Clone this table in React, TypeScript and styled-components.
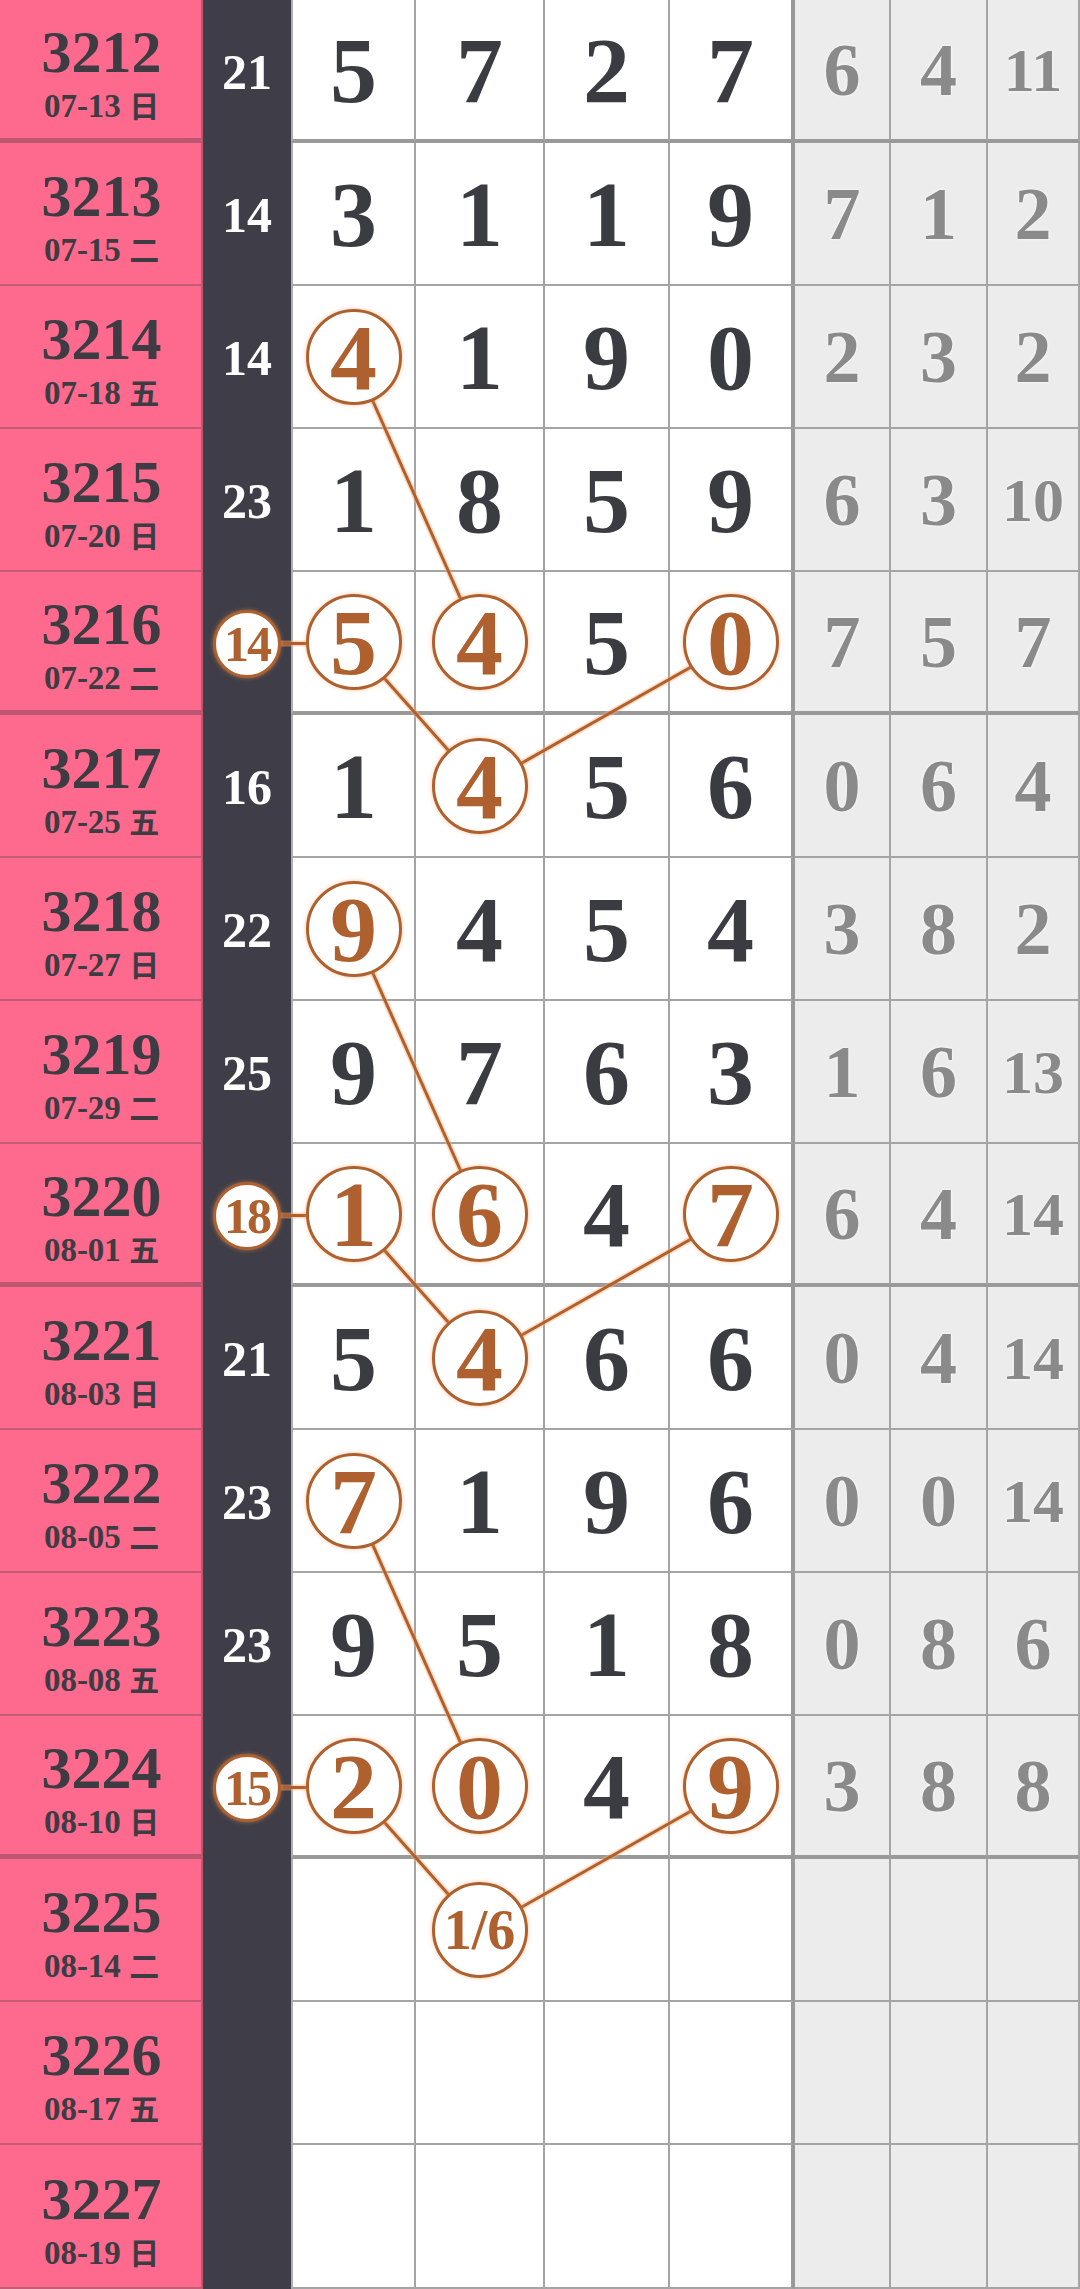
import React from 'react';
import styled, { createGlobalStyle } from 'styled-components';

interface Draw {
  issue: string;
  date: string;
  day: string;
  sum: string;
  sumHit?: boolean;
  nums: string[];
  hits: number[];
  stats: string[];
}

const ROW_H = 143;
// x edges of the columns, used by the link overlay
const COLS = [203, 88, 125, 129, 125, 125, 96, 97, 92];
const EDGES = COLS.reduce<number[]>((acc, w) => [...acc, acc[acc.length - 1] + w], [0]);
const colCenter = (i: number) => (EDGES[i] + EDGES[i + 1]) / 2;
const rowCenter = (r: number) => r * ROW_H + ROW_H / 2;

const DRAWS: Draw[] = [
  { issue: '3212', date: '07-13', day: '日', sum: '21', nums: ['5', '7', '2', '7'], hits: [], stats: ['6', '4', '11'] },
  { issue: '3213', date: '07-15', day: '二', sum: '14', nums: ['3', '1', '1', '9'], hits: [], stats: ['7', '1', '2'] },
  { issue: '3214', date: '07-18', day: '五', sum: '14', nums: ['4', '1', '9', '0'], hits: [0], stats: ['2', '3', '2'] },
  { issue: '3215', date: '07-20', day: '日', sum: '23', nums: ['1', '8', '5', '9'], hits: [], stats: ['6', '3', '10'] },
  { issue: '3216', date: '07-22', day: '二', sum: '14', sumHit: true, nums: ['5', '4', '5', '0'], hits: [0, 1, 3], stats: ['7', '5', '7'] },
  { issue: '3217', date: '07-25', day: '五', sum: '16', nums: ['1', '4', '5', '6'], hits: [1], stats: ['0', '6', '4'] },
  { issue: '3218', date: '07-27', day: '日', sum: '22', nums: ['9', '4', '5', '4'], hits: [0], stats: ['3', '8', '2'] },
  { issue: '3219', date: '07-29', day: '二', sum: '25', nums: ['9', '7', '6', '3'], hits: [], stats: ['1', '6', '13'] },
  { issue: '3220', date: '08-01', day: '五', sum: '18', sumHit: true, nums: ['1', '6', '4', '7'], hits: [0, 1, 3], stats: ['6', '4', '14'] },
  { issue: '3221', date: '08-03', day: '日', sum: '21', nums: ['5', '4', '6', '6'], hits: [1], stats: ['0', '4', '14'] },
  { issue: '3222', date: '08-05', day: '二', sum: '23', nums: ['7', '1', '9', '6'], hits: [0], stats: ['0', '0', '14'] },
  { issue: '3223', date: '08-08', day: '五', sum: '23', nums: ['9', '5', '1', '8'], hits: [], stats: ['0', '8', '6'] },
  { issue: '3224', date: '08-10', day: '日', sum: '15', sumHit: true, nums: ['2', '0', '4', '9'], hits: [0, 1, 3], stats: ['3', '8', '8'] },
  { issue: '3225', date: '08-14', day: '二', sum: '', nums: ['', '1/6', '', ''], hits: [1], stats: ['', '', ''] },
  { issue: '3226', date: '08-17', day: '五', sum: '', nums: ['', '', '', ''], hits: [], stats: ['', '', ''] },
  { issue: '3227', date: '08-19', day: '日', sum: '', nums: ['', '', '', ''], hits: [], stats: ['', '', ''] },
];

// each link: [from col, from row] -> [to col, to row]; col index into EDGES
const LINKS: [number, number, number, number][] = [];
[2, 6, 10].forEach((r) => {
  LINKS.push([2, r, 3, r + 2]);
  LINKS.push([2, r + 2, 3, r + 3]);
  LINKS.push([3, r + 3, 5, r + 2]);
  LINKS.push([1, r + 2, 2, r + 2]);
});

const isThick = (i: number) => i % 4 === 0 && i < 13;

const App: React.FC = () => (
  <>
    <GlobalStyle />
    <Board>
      {DRAWS.map((d, i) => (
        <Row key={d.issue} $last={i === DRAWS.length - 1}>
          <IssueCell $thick={isThick(i)}>
            <IssueNo>{d.issue}</IssueNo>
            <IssueDate>
              {d.date} <DayMark>{d.day}</DayMark>
            </IssueDate>
          </IssueCell>
          <SumCell>
            {d.sumHit ? (
              <Ring $size={68}>
                <SumText $hit>{d.sum}</SumText>
              </Ring>
            ) : (
              <SumText>{d.sum}</SumText>
            )}
          </SumCell>
          {d.nums.map((n, k) => (
            <NumCell key={k} $thick={isThick(i)} $first={k === 0} $last={k === 3}>
              {d.hits.includes(k) ? (
                <Ring $size={96}>
                  <NumText $hit $small={n.length > 1}>{n}</NumText>
                </Ring>
              ) : (
                <NumText>{n}</NumText>
              )}
            </NumCell>
          ))}
          {d.stats.map((s, k) => (
            <StatCell key={k} $thick={isThick(i)}>
              <StatText $wide={s.length > 1}>{s}</StatText>
            </StatCell>
          ))}
        </Row>
      ))}
      <LinkLayer width={1080} height={2289} viewBox='0 0 1080 2289'>
        {LINKS.map(([c1, r1, c2, r2], i) => (
          <g key={i}>
            <line x1={colCenter(c1)} y1={rowCenter(r1)} x2={colCenter(c2)} y2={rowCenter(r2)} stroke='rgba(255,170,110,0.45)' strokeWidth={6} />
            <line x1={colCenter(c1)} y1={rowCenter(r1)} x2={colCenter(c2)} y2={rowCenter(r2)} stroke='#ae612f' strokeWidth={3} />
          </g>
        ))}
      </LinkLayer>
    </Board>
  </>
);

export default App;

const GlobalStyle = createGlobalStyle`
  html, body {
    margin: 0;
    padding: 0;
    background: #ffffff;
  }
  * {
    box-sizing: border-box;
  }
`;

const Board = styled.div`
  position: relative;
  width: 1080px;
  font-family: 'Liberation Serif', 'Noto Sans CJK SC', serif;
  font-weight: 700;
`;

const Row = styled.div<{ $last: boolean }>`
  display: grid;
  grid-template-columns: ${COLS.map((c) => `${c}px`).join(' ')};
  height: ${({ $last }) => ($last ? ROW_H + 1 : ROW_H)}px;
`;

const IssueCell = styled.div<{ $thick: boolean }>`
  display: flex;
  flex-direction: column;
  align-items: center;
  justify-content: center;
  gap: 7px;
  padding: 6px 0 0 2px;
  background: #fd6a8d;
  color: #3d3c43;
  border-right: 2px solid #c05571;
  border-bottom: ${({ $thick }) => ($thick ? '5px solid #bd5670' : '2px solid #c45b75')};
`;

const IssueNo = styled.span`
  font-size: 60px;
  line-height: 1;
`;

const IssueDate = styled.span`
  font-size: 33px;
  line-height: 1;
  white-space: nowrap;
`;

const DayMark = styled.span`
  font-family: 'Noto Sans CJK SC', sans-serif;
  font-weight: 700;
  font-size: 30px;
`;

const SumCell = styled.div`
  display: flex;
  align-items: center;
  justify-content: center;
  background: #3f3e48;
`;

const SumText = styled.span<{ $hit?: boolean }>`
  font-size: 50px;
  line-height: 1;
  color: ${({ $hit }) => ($hit ? '#ae612f' : '#ffffff')};
  letter-spacing: ${({ $hit }) => ($hit ? '-2px' : '0')};
`;

const NumCell = styled.div<{ $thick: boolean; $first: boolean; $last: boolean }>`
  display: flex;
  align-items: center;
  justify-content: center;
  background: #ffffff;
  border-left: ${({ $first }) => ($first ? '2px solid #b0b0b0' : 'none')};
  border-right: ${({ $last }) => ($last ? '4px solid #999999' : '2px solid #a4a4a4')};
  border-bottom: ${({ $thick }) => ($thick ? '4px solid #999999' : '2px solid #a4a4a4')};
`;

const NumText = styled.span<{ $hit?: boolean; $small?: boolean }>`
  font-size: ${({ $small }) => ($small ? 56 : 94)}px;
  line-height: 1;
  color: ${({ $hit }) => ($hit ? '#ae612f' : '#3b3b42')};
`;

const StatCell = styled.div<{ $thick: boolean }>`
  display: flex;
  align-items: center;
  justify-content: center;
  background: #ececec;
  border-right: 2px solid #a4a4a4;
  border-bottom: ${({ $thick }) => ($thick ? '4px solid #999999' : '2px solid #a4a4a4')};
`;

const StatText = styled.span<{ $wide: boolean }>`
  font-size: ${({ $wide }) => ($wide ? 62 : 74)}px;
  line-height: 1;
  color: #8a8a8a;
  text-shadow: 0 0 3px #ffffff;
`;

const Ring = styled.span<{ $size: number }>`
  position: relative;
  z-index: 2;
  display: inline-flex;
  align-items: center;
  justify-content: center;
  width: ${({ $size }) => $size}px;
  height: ${({ $size }) => $size}px;
  border-radius: 50%;
  border: 3px solid #ae612f;
  background: #ffffff;
  box-shadow: 0 0 4px rgba(255, 150, 80, 0.55);
`;

const LinkLayer = styled.svg`
  position: absolute;
  left: 0;
  top: 0;
  z-index: 1;
  pointer-events: none;
`;
